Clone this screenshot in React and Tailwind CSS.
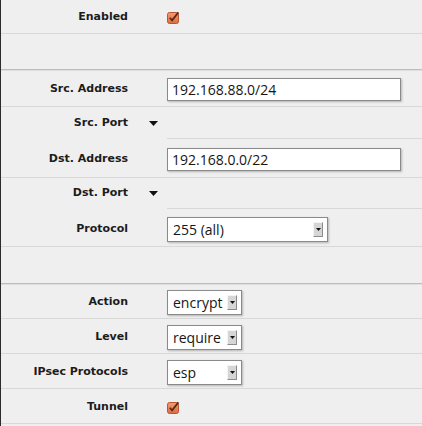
import React from "react";

const labelCls =
  "w-[127px] shrink-0 text-right text-[11px] font-bold text-[#1c1c1c] [font-family:'DejaVu_Sans',Verdana,sans-serif]";

function Checkbox() {
  return (
    <svg width="13" height="13" viewBox="0 0 13 13" className="block">
      <defs>
        <linearGradient id="cb" x1="0" y1="0" x2="0" y2="1">
          <stop offset="0" stopColor="#f39a72" />
          <stop offset="1" stopColor="#dc6c42" />
        </linearGradient>
      </defs>
      <rect x="0.5" y="1.5" width="11" height="11" rx="2" fill="url(#cb)" stroke="#b8562f" />
      <path d="M2.8 6.8 L5.1 9.4 L11.4 1.4" fill="none" stroke="#5a2812" strokeWidth="1.7" />
    </svg>
  );
}

function Caret() {
  return (
    <svg width="9" height="5" viewBox="0 0 9 5" className="block">
      <path d="M0 0 H9 L4.5 5 Z" fill="#111" />
    </svg>
  );
}

function TextInput({ value }) {
  return (
    <div className="h-[23px] w-[234px] bg-white border border-[#8a8a8a] shadow-[1px_1px_2px_rgba(0,0,0,0.25)] flex items-center px-[4px] text-[14px] text-[#161616] [font-family:'Open_Sans',sans-serif]">
      {value}
    </div>
  );
}

function Select({ value, width }) {
  return (
    <div
      className={`h-[25px] ${width} bg-white border border-[#8a8a8a] shadow-[1px_1px_2px_rgba(0,0,0,0.25)] flex items-center justify-between pl-[5px] pr-[4px] text-[14px] text-[#161616] [font-family:'Open_Sans',sans-serif]`}
    >
      <span>{value}</span>
      <span className="w-[10px] h-[15px] bg-[#d6d6d6] border-t border-l border-t-[#f4f4f4] border-l-[#f4f4f4] border-b border-r border-b-[#8c8c8c] border-r-[#8c8c8c] flex items-center justify-center">
        <svg width="5" height="3" viewBox="0 0 5 3" className="block">
          <path d="M0 0 H5 L2.5 3 Z" fill="#111" />
        </svg>
      </span>
    </div>
  );
}

function Row({ label, h, children }) {
  return (
    <div className={`flex items-center ${h} border-b border-[#d8d8d8] pt-[2px]`}>
      <div className={labelCls}>{label}</div>
      <div className="w-[39px] shrink-0" />
      {children}
    </div>
  );
}

function PortRow({ label, h }) {
  return (
    <div className={`flex ${h}`}>
      <div className={`${labelCls} self-center`}>{label}</div>
      <div className="w-[39px] shrink-0 self-center pl-[21px]">
        <Caret />
      </div>
      <div className="flex-1 border-b border-[#d8d8d8]" />
    </div>
  );
}

export default function App() {
  return (
    <div className="w-[422px] h-[426px] bg-[#efefef] border-l border-[#2c2c2c] overflow-hidden">
      <Row label="Enabled" h="h-[34px]">
        <Checkbox />
      </Row>
      <div className="h-[35px]" />
      <div className="h-px bg-[#bdbdbd]" />
      <div className="h-px bg-[#dedede]" />

      <Row label="Src. Address" h="h-[36px]">
        <TextInput value="192.168.88.0/24" />
      </Row>
      <PortRow label="Src. Port" h="h-[32px]" />
      <Row label="Dst. Address" h="h-[39px]">
        <TextInput value="192.168.0.0/22" />
      </Row>
      <PortRow label="Dst. Port" h="h-[31px]" />
      <div className="flex items-center h-[38px] border-b border-[#d8d8d8] pt-[4px]">
        <div className={labelCls}>Protocol</div>
        <div className="w-[39px] shrink-0" />
        <Select value="255 (all)" width="w-[161px]" />
      </div>

      <div className="h-[36px]" />
      <div className="h-px bg-[#bdbdbd]" />
      <div className="h-px bg-[#dedede]" />

      <Row label="Action" h="h-[34px]">
        <Select value="encrypt" width="w-[75px]" />
      </Row>
      <Row label="Level" h="h-[35px]">
        <Select value="require" width="w-[75px]" />
      </Row>
      <Row label="IPsec Protocols" h="h-[35px]">
        <Select value="esp" width="w-[75px]" />
      </Row>
      <Row label="Tunnel" h="h-[35px]">
        <Checkbox />
      </Row>
    </div>
  );
}
